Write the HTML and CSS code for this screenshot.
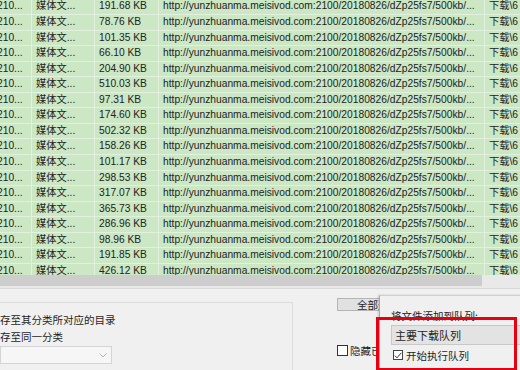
FILE: index.html
```html
<!DOCTYPE html>
<html>
<head>
<meta charset="utf-8">
<link rel="stylesheet" href="styles.css">
</head>
<body>
<div class="window">
  <div class="list">
    <div class="rows">
      <div class="row"><span class="c c1">210...</span><span class="c c2">媒体文...</span><span class="c c3">191.68 KB</span><span class="c c4">http://yunzhuanma.meisivod.com:2100/20180826/dZp25fs7/500kb/...</span><span class="c c5">下载\6</span></div>
      <div class="row"><span class="c c1">210...</span><span class="c c2">媒体文...</span><span class="c c3">78.76 KB</span><span class="c c4">http://yunzhuanma.meisivod.com:2100/20180826/dZp25fs7/500kb/...</span><span class="c c5">下载\6</span></div>
      <div class="row"><span class="c c1">210...</span><span class="c c2">媒体文...</span><span class="c c3">101.35 KB</span><span class="c c4">http://yunzhuanma.meisivod.com:2100/20180826/dZp25fs7/500kb/...</span><span class="c c5">下载\6</span></div>
      <div class="row"><span class="c c1">210...</span><span class="c c2">媒体文...</span><span class="c c3">66.10 KB</span><span class="c c4">http://yunzhuanma.meisivod.com:2100/20180826/dZp25fs7/500kb/...</span><span class="c c5">下载\6</span></div>
      <div class="row"><span class="c c1">210...</span><span class="c c2">媒体文...</span><span class="c c3">204.90 KB</span><span class="c c4">http://yunzhuanma.meisivod.com:2100/20180826/dZp25fs7/500kb/...</span><span class="c c5">下载\6</span></div>
      <div class="row"><span class="c c1">210...</span><span class="c c2">媒体文...</span><span class="c c3">510.03 KB</span><span class="c c4">http://yunzhuanma.meisivod.com:2100/20180826/dZp25fs7/500kb/...</span><span class="c c5">下载\6</span></div>
      <div class="row"><span class="c c1">210...</span><span class="c c2">媒体文...</span><span class="c c3">97.31 KB</span><span class="c c4">http://yunzhuanma.meisivod.com:2100/20180826/dZp25fs7/500kb/...</span><span class="c c5">下载\6</span></div>
      <div class="row"><span class="c c1">210...</span><span class="c c2">媒体文...</span><span class="c c3">174.60 KB</span><span class="c c4">http://yunzhuanma.meisivod.com:2100/20180826/dZp25fs7/500kb/...</span><span class="c c5">下载\6</span></div>
      <div class="row"><span class="c c1">210...</span><span class="c c2">媒体文...</span><span class="c c3">502.32 KB</span><span class="c c4">http://yunzhuanma.meisivod.com:2100/20180826/dZp25fs7/500kb/...</span><span class="c c5">下载\6</span></div>
      <div class="row"><span class="c c1">210...</span><span class="c c2">媒体文...</span><span class="c c3">158.26 KB</span><span class="c c4">http://yunzhuanma.meisivod.com:2100/20180826/dZp25fs7/500kb/...</span><span class="c c5">下载\6</span></div>
      <div class="row"><span class="c c1">210...</span><span class="c c2">媒体文...</span><span class="c c3">101.17 KB</span><span class="c c4">http://yunzhuanma.meisivod.com:2100/20180826/dZp25fs7/500kb/...</span><span class="c c5">下载\6</span></div>
      <div class="row"><span class="c c1">210...</span><span class="c c2">媒体文...</span><span class="c c3">298.53 KB</span><span class="c c4">http://yunzhuanma.meisivod.com:2100/20180826/dZp25fs7/500kb/...</span><span class="c c5">下载\6</span></div>
      <div class="row"><span class="c c1">210...</span><span class="c c2">媒体文...</span><span class="c c3">317.07 KB</span><span class="c c4">http://yunzhuanma.meisivod.com:2100/20180826/dZp25fs7/500kb/...</span><span class="c c5">下载\6</span></div>
      <div class="row"><span class="c c1">210...</span><span class="c c2">媒体文...</span><span class="c c3">365.73 KB</span><span class="c c4">http://yunzhuanma.meisivod.com:2100/20180826/dZp25fs7/500kb/...</span><span class="c c5">下载\6</span></div>
      <div class="row"><span class="c c1">210...</span><span class="c c2">媒体文...</span><span class="c c3">286.96 KB</span><span class="c c4">http://yunzhuanma.meisivod.com:2100/20180826/dZp25fs7/500kb/...</span><span class="c c5">下载\6</span></div>
      <div class="row"><span class="c c1">210...</span><span class="c c2">媒体文...</span><span class="c c3">98.96 KB</span><span class="c c4">http://yunzhuanma.meisivod.com:2100/20180826/dZp25fs7/500kb/...</span><span class="c c5">下载\6</span></div>
      <div class="row"><span class="c c1">210...</span><span class="c c2">媒体文...</span><span class="c c3">191.85 KB</span><span class="c c4">http://yunzhuanma.meisivod.com:2100/20180826/dZp25fs7/500kb/...</span><span class="c c5">下载\6</span></div>
      <div class="row"><span class="c c1">210...</span><span class="c c2">媒体文...</span><span class="c c3">426.12 KB</span><span class="c c4">http://yunzhuanma.meisivod.com:2100/20180826/dZp25fs7/500kb/...</span><span class="c c5">下载\6</span></div>
    </div>
  </div>
  <div class="hscroll"><div class="thumb"></div></div>
  <div class="bottom">
    <div class="group">
      <div class="gline">存至其分类所对应的目录</div>
      <div class="gline">存至同一分类</div>
      <div class="combo"><svg class="chev" width="8" height="5" viewBox="0 0 8 5"><path d="M0.5 0.5 L4 4 L7.5 0.5" fill="none" stroke="#b8b8b8" stroke-width="1"/></svg></div>
    </div>
    <div class="side">
      <div class="btn">全部选</div>
      <div class="chkrow"><span class="box"></span><span class="lbl">隐藏已</span></div>
    </div>
    <div class="popup">
      <div class="ptitle">将文件添加到队列:</div>
      <div class="pselect">主要下载队列</div>
      <div class="pchk"><span class="box checked"><svg width="8" height="7" viewBox="0 0 8 7"><path d="M0.8 3.6 L3 5.8 L7.3 0.8" fill="none" stroke="#333" stroke-width="1"/></svg></span><span class="lbl">开始执行队列</span></div>
    </div>
    <div class="redbox"></div>
  </div>
</div>
</body>
</html>
```

FILE: styles.css
```css
html, body {
  margin: 0;
  padding: 0;
}
body {
  width: 520px;
  height: 370px;
  overflow: hidden;
  background: #f0f0f0;
  font-family: "Liberation Sans", "Noto Sans CJK SC", sans-serif;
  color: #222;
}
.window {
  position: relative;
  width: 520px;
  height: 370px;
  overflow: hidden;
}
.list {
  height: 274.5px;
  overflow: hidden;
  background: #cbe7c4;
}
.rows {
  margin-top: -0.6px;
  margin-left: -7px;
}
.row {
  display: grid;
  grid-template-columns: 39px 63px 63.5px 326.5px 60px;
  height: 15.57px;
  box-sizing: border-box;
  border-bottom: 1px solid #e2f1df;
  font-size: 10.25px;
  line-height: 14.57px;
  white-space: nowrap;
}
.c {
  padding-left: 4px;
  border-right: 1px solid #e2f1df;
  overflow: hidden;
}
.c4 { padding-left: 4.5px; }
.hscroll {
  height: 14.5px;
  box-sizing: border-box;
  background: #e9e9e9;
  border-bottom: 1px solid #d9d9d9;
  padding-bottom: 2px;
}
.thumb {
  width: 482px;
  height: 100%;
  background: #cdcdcd;
}
.bottom {
  display: flex;
  height: 81px;
  font-family: "Noto Sans CJK SC", "Liberation Sans", sans-serif;
  font-size: 10.5px;
  color: #1e1e1e;
}
.group {
  margin-top: 13px;
  width: 293px;
  box-sizing: border-box;
  border-top: 1px solid #dcdcdc;
  border-right: 1px solid #dcdcdc;
  padding-top: 7.5px;
}
.gline {
  line-height: 17px;
  height: 17px;
}
.combo {
  margin-top: 1.5px;
  width: 112px;
  height: 18px;
  box-sizing: border-box;
  border: 1px solid #d4d4d4;
  background: #f6f6f6;
  display: flex;
  justify-content: flex-end;
  align-items: center;
  padding-right: 4px;
}
.side {
  margin-left: 44px;
  display: flex;
  flex-direction: column;
}
.btn {
  margin-top: 9px;
  width: 60px;
  height: 13px;
  box-sizing: border-box;
  border: 1px solid #b5b5b5;
  background: #e1e1e1;
  line-height: 11px;
  padding-left: 19px;
  white-space: nowrap;
}
.chkrow {
  margin-top: 32px;
  display: flex;
  align-items: center;
  gap: 2px;
  white-space: nowrap;
}
.box {
  width: 11px;
  height: 11px;
  box-sizing: border-box;
  border: 1px solid #333;
  background: #fff;
  display: flex;
  align-items: center;
  justify-content: center;
}
.popup {
  position: absolute;
  left: 379px;
  top: 295px;
  width: 160px;
  height: 90px;
  box-sizing: border-box;
  background: #f0f0f0;
  border-left: 1px solid #a8a8a8;
  border-top: 1px solid #d0d0d0;
  box-shadow: -1px 0 2px rgba(0,0,0,0.15);
  padding-left: 11px;
}
.ptitle {
  margin-top: 13px;
  line-height: 14px;
  height: 14px;
  white-space: nowrap;
}
.pselect {
  margin-top: 2px;
  height: 20px;
  box-sizing: border-box;
  border: 1px solid #c8c8c8;
  background: #e3e3e3;
  line-height: 18px;
  padding-left: 3px;
  font-size: 11px;
  white-space: nowrap;
}
.pchk {
  height: 20px;
  display: flex;
  align-items: center;
  padding-left: 2px;
  gap: 3px;
  white-space: nowrap;
}
.pchk .box {
  width: 10px;
  height: 10px;
  border-color: #444;
}
.redbox {
  position: absolute;
  left: 376px;
  top: 317px;
  width: 141px;
  height: 54px;
  box-sizing: border-box;
  border: 3px solid #e60012;
}
```
